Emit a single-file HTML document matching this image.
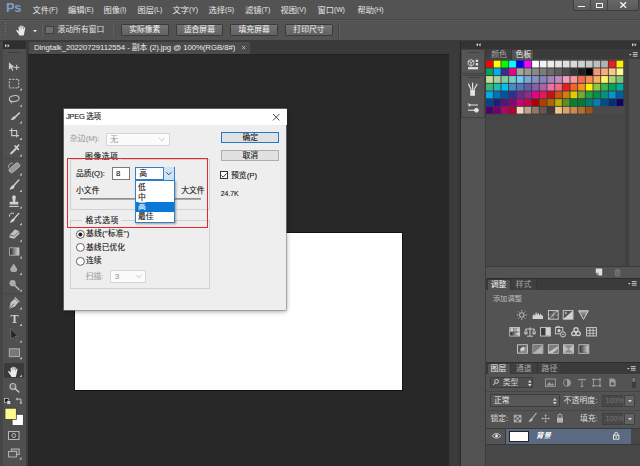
<!DOCTYPE html>
<html lang="zh-CN">
<head>
<meta charset="utf-8">
<title>JPEG 选项</title>
<style>
html,body{margin:0;padding:0;}
body{width:640px;height:466px;overflow:hidden;background:#282828;position:relative;
 font-family:"Liberation Sans","Noto Sans CJK SC",sans-serif;font-size:7.8px;color:#e4e4e4;line-height:1;}
.a,.a *{box-sizing:border-box}
.a{position:absolute;white-space:nowrap}
.t{position:absolute;white-space:nowrap;line-height:10px;height:10px}
svg{position:absolute;overflow:visible}
/* swatches */
.sw i{position:absolute;width:6.9px;height:6.9px;display:block}
/* dialog */
#dlg{position:absolute;left:63.7px;top:109px;width:222.6px;height:200.8px;background:#eeeeee;color:#111;
 box-shadow:0 0 0 0.6px #8a8a8a, 0 1px 5px rgba(0,0,0,.45);}
#dlg .t{color:#111}
.btn{box-sizing:border-box;position:absolute;background:#e1e1e1;border:0.7px solid #adadad;text-align:center;line-height:10px;color:#111}
.ob{position:absolute;top:23.6px;height:12px;width:47.5px;border:0.7px solid #3a3a3a;border-radius:1.5px;
 background:linear-gradient(#747474,#626262);text-align:center;line-height:10.5px;color:#f2f2f2;font-size:7.8px;box-sizing:border-box}
.m{font-size:8.3px;color:#e8e8e8}.m span{font-size:6.9px;letter-spacing:-0.1px;position:relative;top:-0.3px}
#dlg .t,#dlg .btn{-webkit-text-stroke-width:0.1px}
</style>
</head>
<body>

<!-- ===== menu bar ===== -->
<div class="a" style="left:0;top:0;width:640px;height:20px;background:#535353"></div>
<div class="a" style="left:0;top:18.7px;width:640px;height:0.9px;background:#474747"></div>
<div class="t" style="left:6px;top:1px;height:14px;line-height:14px;font-size:12.8px;font-weight:bold;color:#839bcb;letter-spacing:-0.4px">Ps</div>
<div class="t m" style="left:32.5px;top:4.5px">文件<span>(F)</span></div>
<div class="t m" style="left:68px;top:4.5px">编辑<span>(E)</span></div>
<div class="t m" style="left:103.5px;top:4.5px">图像<span>(I)</span></div>
<div class="t m" style="left:137.5px;top:4.5px">图层<span>(L)</span></div>
<div class="t m" style="left:172.5px;top:4.5px">文字<span>(Y)</span></div>
<div class="t m" style="left:208.5px;top:4.5px">选择<span>(S)</span></div>
<div class="t m" style="left:245px;top:4.5px">滤镜<span>(T)</span></div>
<div class="t m" style="left:280.5px;top:4.5px">视图<span>(V)</span></div>
<div class="t m" style="left:317.4px;top:4.5px">窗口<span>(W)</span></div>
<div class="t m" style="left:357.5px;top:4.5px">帮助<span>(H)</span></div>
<!-- window buttons -->
<div class="a" style="left:572.5px;top:-2px;width:66px;height:12.6px;background:linear-gradient(#686868,#5a5a5a);border:0.7px solid #3e3e3e;border-radius:0 0 2px 2px"></div>
<div class="a" style="left:590px;top:0;width:0.8px;height:10.5px;background:#424242"></div>
<div class="a" style="left:607px;top:0;width:0.8px;height:10.5px;background:#424242"></div>
<div class="a" style="left:578px;top:5.8px;width:7px;height:1.6px;background:#f4f4f4"></div>
<div class="a" style="left:595.5px;top:2.6px;width:7px;height:5.2px;border:1.3px solid #f4f4f4;border-top-width:1.8px"></div>
<svg style="left:619.5px;top:2.3px" width="6.4" height="6" viewBox="0 0 6.4 6"><path d="M0.3 0.2 L6.1 5.8 M6.1 0.2 L0.3 5.8" stroke="#f4f4f4" stroke-width="1.4" fill="none"/></svg>

<!-- ===== options bar ===== -->
<div class="a" style="left:0;top:19.6px;width:640px;height:0.9px;background:#5a5a5a;z-index:1"></div>
<div class="a" style="left:0;top:20.5px;width:640px;height:20px;background:#535353"></div>
<div class="a" style="left:0;top:40.2px;width:640px;height:1px;background:#3a3a3a"></div>
<div class="a" style="left:4.5px;top:23px;width:1.4px;height:14px;background:repeating-linear-gradient(#7a7a7a 0 1px,#444 1px 2px)"></div>
<!-- hand icon -->
<svg style="left:15.5px;top:24.8px" width="11.5" height="10.5" viewBox="0 0 23 21"><path d="M7 21 C5 17 2 14 0.5 11.5 C0 10 1.5 9 3 10.5 L5.5 13 L5 4 C5 2.5 7.3 2.5 7.5 4 L8.2 9.5 L8.6 1.8 C8.7 0.2 11.2 0.2 11.3 1.8 L11.6 9.4 L12.6 2.6 C12.9 1.1 15.2 1.4 15.1 3 L14.6 10 L16.3 5.4 C16.9 4 18.9 4.7 18.5 6.2 L16.8 14.5 C16.4 17 15.8 19 15 21 Z" fill="#e9e9e9"/></svg>
<svg style="left:33.3px;top:29.5px" width="4" height="2.4" viewBox="0 0 4 2.4"><path d="M0 0H4L2 2.4Z" fill="#dcdcdc"/></svg>
<div class="a" style="left:41.5px;top:22.5px;width:0.8px;height:15px;background:#454545"></div>
<div class="a" style="left:42.3px;top:22.5px;width:0.7px;height:15px;background:#5f5f5f"></div>
<div class="a" style="left:45.4px;top:26px;width:8.2px;height:8.2px;background:#6e6e6e;border:0.8px solid #404040"></div>
<div class="t" style="left:57.5px;top:25px">滚动所有窗口</div>
<div class="a" style="left:112.6px;top:22.5px;width:0.8px;height:15px;background:#454545"></div>
<div class="a" style="left:113.4px;top:22.5px;width:0.7px;height:15px;background:#5f5f5f"></div>
<div class="ob" style="left:121px">实际像素</div>
<div class="ob" style="left:175.6px">适合屏幕</div>
<div class="ob" style="left:230.4px">填充屏幕</div>
<div class="ob" style="left:285.2px">打印尺寸</div>
<div class="a" style="left:338.4px;top:22.5px;width:0.8px;height:15px;background:#454545"></div>
<div class="a" style="left:339.2px;top:22.5px;width:0.7px;height:15px;background:#5f5f5f"></div>

<!-- ===== document tab bar ===== -->
<div class="a" style="left:28.2px;top:41.2px;width:432.3px;height:12.8px;background:#3a3a3a"></div>
<div class="a" style="left:28.5px;top:41.5px;width:221.5px;height:12.5px;background:#4b4b4b"></div>
<div class="t" id="tabtxt" style="left:34px;top:42.8px;color:#ececec;letter-spacing:-0.065px">Dingtalk_20220729112554 - 副本 (2).jpg @ 100%(RGB/8#)</div>
<svg style="left:242.1px;top:45.9px" width="3.3" height="3.3" viewBox="0 0 4 4"><path d="M0 0L4 4M4 0L0 4" stroke="#c4c4c4" stroke-width="1"/></svg>
<div class="a" style="left:27.5px;top:54px;width:433px;height:0.6px;background:#222"></div>

<!-- ===== canvas ===== -->
<div class="a" style="left:75.1px;top:232.5px;width:326.5px;height:157.5px;background:#fff;box-shadow:0 0 0 0.9px #121212"></div>
<!-- vertical strip right of canvas -->
<div class="a" style="left:449.3px;top:54px;width:11.2px;height:412px;background:linear-gradient(90deg,#383838,#3d3d3d 60%,#353535)"></div>

<!-- ===== left toolbar ===== -->
<div class="a" style="left:0;top:41px;width:28.2px;height:425px;background:#3c3c3c"></div><div class="a" style="left:0;top:41px;width:3px;height:425px;background:#454545"></div>
<div class="a" style="left:3px;top:41px;width:22.6px;height:425px;background:#4f4f4f"></div>
<div class="a" style="left:2.5px;top:41px;width:23.8px;height:7.6px;background:#2f2f2f"></div>
<svg style="left:4.5px;top:43.5px" width="5" height="3.6" viewBox="0 0 5 3.6"><path d="M0 0L2 1.8L0 3.6ZM2.6 0L4.6 1.8L2.6 3.6Z" fill="#d0d0d0"/></svg>
<div class="a" style="left:8px;top:52.3px;width:13px;height:1px;background:#3e3e3e"></div>
<!-- hand highlight -->
<div class="a" style="left:4px;top:363.2px;width:19.8px;height:15px;background:#3a3a3a;border-radius:1.5px"></div>
<!--TOOLS-->
<svg id="tools" style="left:0;top:0;opacity:0.86" width="28" height="466" viewBox="0 0 28 466" fill="none" stroke="none">
 <!-- move -->
 <path d="M8.9 62.2 L8.9 69.8 L10.8 68 L12.3 70.9 L13.4 70.4 L12 67.5 L14.6 67.3 Z" fill="#e0e0e0"/>
 <path d="M16.7 64.8V70M14.1 67.4H19.3" stroke="#e0e0e0" stroke-width="1"/>
 <!-- marquee -->
 <rect x="9.3" y="79.3" width="9.4" height="8.6" stroke="#e0e0e0" stroke-width="1" stroke-dasharray="2 1.2"/>
 <!-- lasso -->
 <ellipse cx="14.2" cy="98.6" rx="4.9" ry="2.9" stroke="#d8d8d8" stroke-width="1.05" transform="rotate(-9 14.2 98.6)"/>
 <path d="M10.4 100.6 C10 101.8 11.4 102.4 11.4 103.6" stroke="#d8d8d8" stroke-width="1"/>
 <!-- quick select -->
 <g transform="translate(1.2 0.2)"><path d="M18.6 112.4 L13.6 117.2" stroke="#e0e0e0" stroke-width="1.5"/>
 <path d="M13.8 116 C11.8 116 10.6 117.6 9.6 119.6 C11.8 120.2 14 119.4 14.8 117.4 Z" fill="#e0e0e0"/></g>
 <!-- crop -->
 <path d="M11.7 128.2V135.6H19M9.3 130.5H16.7V137.6" stroke="#dedede" stroke-width="1.15"/>
 <!-- eyedropper -->
 <path d="M10 154.6 L10.6 152.6 L15.6 147.6 L17 149 L12 154 Z" fill="#e6e6e6"/>
 <path d="M15 146 L18.4 149.4 M16.6 147.4 L18.6 145.2" stroke="#e6e6e6" stroke-width="1.7" stroke-linecap="round"/>
 <!-- separator -->
 <path d="M4 158.8H24.5" stroke="#444" stroke-width="0.8"/>
 <!-- heal -->
 <rect x="8.4" y="165.4" width="12" height="4.8" rx="1.8" fill="#a4a4a4" stroke="#d2d2d2" stroke-width="0.8" transform="rotate(-40 14.4 167.8)"/>
 <path d="M8.6 167.6 A3.6 3.6 0 0 1 12.6 163.2" stroke="#c8c8c8" stroke-width="0.9"/>
 <!-- brush -->
 <path d="M18.8 180 L13.4 186" stroke="#e6e6e6" stroke-width="1.4" stroke-linecap="round"/>
 <path d="M13.4 185 C11.6 185.2 11 187 9.4 189.4 C12 189.6 14.2 188.6 14.6 186.4 Z" fill="#e6e6e6"/>
 <!-- stamp -->
 <g transform="translate(-0.3 1.4)"><path d="M12.6 196.6 A1.9 1.9 0 1 1 16 196.6 L15.4 200.4 H18.6 V203 H10 V200.4 H13.2 Z" fill="#e6e6e6"/>
 <path d="M9.6 205H19" stroke="#e6e6e6" stroke-width="1.1"/></g>
 <!-- history brush -->
 <path d="M18.8 213.4 L13.6 219.2" stroke="#e6e6e6" stroke-width="1.4" stroke-linecap="round"/>
 <path d="M13.6 218.4 C11.8 218.6 11.2 220.4 9.6 222.6 C12.2 222.8 14.4 221.8 14.8 219.6 Z" fill="#e6e6e6"/>
 <path d="M9.4 216.6 A3 3 0 0 1 14 213.6" stroke="#e6e6e6" stroke-width="1"/>
 <!-- eraser -->
 <g transform="translate(0.2 -0.9)"><path d="M9.4 236 L14.6 230.4 L19.2 231.8 L19.2 234.6 L14 239.6 L9.4 238.6 Z" fill="#d4d4d4"/>
 <path d="M9.4 236 L14.2 237 L19.2 231.8" stroke="#535353" stroke-width="0.7"/></g>
 <!-- gradient -->
 <rect x="9.2" y="247.4" width="10.2" height="8.2" fill="#c8c8c8"/>
 <rect x="10" y="248.2" width="8.6" height="6.6" fill="url(#gr1)"/>
 <!-- blur drop -->
 <path d="M13.7 263.4 C14.9 266 17.2 267.6 17.2 269.4 A3.5 2.6 0 0 1 10.2 269.4 C10.2 267.6 12.5 266 13.7 263.4 Z" fill="#bcbcbc"/>
 <!-- dodge -->
 <circle cx="12.6" cy="283.2" r="3.1" fill="#bcbcbc"/>
 <path d="M14.8 285.4 L19 289.4" stroke="#d0d0d0" stroke-width="1.4" stroke-linecap="round"/>
 <!-- separator -->
 <path d="M4 293.8H24.5" stroke="#444" stroke-width="0.8"/>
 <!-- pen -->
 <g transform="translate(-0.7 0.7)"><path d="M10 308 L11.4 301.6 L15.4 298 L19 301.6 L15.6 305.8 Z" fill="#dadada"/>
 <path d="M10.4 307.6 L14.6 303" stroke="#535353" stroke-width="0.8"/>
 <path d="M15.4 296.6 L20.2 301.4" stroke="#dadada" stroke-width="1.2"/></g>
 <!-- path select -->
 <path d="M10.8 328.6 L10.8 339.4 L13.2 337.2 L15 341 L16.4 340.4 L14.8 336.6 L17.8 336.2 Z" fill="#1e1e1e" stroke="#9a9a9a" stroke-width="0.5"/>
 <!-- rectangle -->
 <rect x="9.3" y="348.8" width="10.2" height="7.8" fill="#7e7e7e" stroke="#bdbdbd" stroke-width="1"/>
 <!-- zoom -->
 <circle cx="12.9" cy="386.4" r="2.9" stroke="#cecece" stroke-width="1.2" fill="#6a6a6a"/>
 <path d="M15.2 388.7 L18.8 392" stroke="#d4d4d4" stroke-width="1.6" stroke-linecap="round"/>
 <!-- default colors / swap -->
 <rect x="4.6" y="398.4" width="3.9" height="3.9" fill="#111" stroke="#e0e0e0" stroke-width="0.7"/>
 <rect x="6.9" y="400.6" width="3.9" height="3.9" fill="#f0f0f0" stroke="#222" stroke-width="0.5"/>
 <g transform="translate(0.7 0.9)"><path d="M16.6 398.2 H20.2 V402" stroke="#dcdcdc" stroke-width="1"/>
 <path d="M16.8 396.6 L15 398.2 L16.8 399.8 Z M18.6 401.6 L20.2 403.4 L21.8 401.6 Z" fill="#dcdcdc"/></g>
 <!-- bg / fg swatches -->
 <!-- quick mask -->
 <rect x="8.6" y="431.6" width="10.4" height="7.8" stroke="#d8d8d8" stroke-width="1" fill="#3a3a3a"/>
 <circle cx="13.8" cy="435.5" r="2.1" stroke="#d0d0d0" stroke-width="0.9" fill="#555"/>
 <!-- screen mode -->
 <rect x="11.4" y="449" width="7.8" height="5.6" stroke="#d0d0d0" stroke-width="0.9" fill="#686868"/>
 <rect x="8.6" y="451.4" width="7.8" height="5.6" stroke="#d0d0d0" stroke-width="0.9" fill="#555"/>
 <!-- corner marks -->
 <g fill="#dcdcdc" transform="translate(-0.5 -0.6)">
  <path d="M22.4 88.6V91H20Z"/><path d="M22.4 105V107.4H20Z"/><path d="M22.4 121.6V124H20Z"/><path d="M22.4 138.2V140.6H20Z"/>
  <path d="M22.4 154.8V157.2H20Z"/><path d="M22.4 173.6V176H20Z"/><path d="M22.4 190.2V192.6H20Z"/><path d="M22.4 206.8V209.2H20Z"/>
  <path d="M22.4 223.4V225.8H20Z"/><path d="M22.4 240V242.4H20Z"/><path d="M22.4 256.6V259H20Z"/><path d="M22.4 273.2V275.6H20Z"/>
  <path d="M22.4 289.8V292.2H20Z"/><path d="M22.4 307.6V310H20Z"/><path d="M22.4 324.2V326.6H20Z"/><path d="M22.4 340.8V343.2H20Z"/>
  <path d="M22.4 357.4V359.8H20Z"/><path d="M22.4 375.2V377.6H20Z"/><path d="M22 457.6V460H19.6Z"/>
 </g>
 <defs><linearGradient id="gr1" x1="0" x2="1"><stop offset="0" stop-color="#2a2a2a"/><stop offset="1" stop-color="#e8e8e8"/></linearGradient></defs>
</svg>
<svg style="left:0;top:400px" width="28" height="30" viewBox="0 400 28 30">
 <rect x="12.1" y="414.3" width="11.2" height="11.2" fill="#ffffff" stroke="#2c2c2c" stroke-width="0.7"/>
 <rect x="5" y="408.2" width="11.3" height="11.3" fill="#fdf98c" stroke="#2c2c2c" stroke-width="0.7"/>
</svg>
<div class="t" style="left:10.5px;top:312.4px;height:14px;line-height:14px;font-family:'Liberation Serif',serif;font-size:12px;font-weight:bold;color:#cdcdcd">T</div>
<!-- hand tool in toolbar -->
<svg style="left:8.4px;top:365.6px" width="11.8" height="11" viewBox="0 0 23 21"><path d="M7 21 C5 17 2 14 0.5 11.5 C0 10 1.5 9 3 10.5 L5.5 13 L5 4 C5 2.5 7.3 2.5 7.5 4 L8.2 9.5 L8.6 1.8 C8.7 0.2 11.2 0.2 11.3 1.8 L11.6 9.4 L12.6 2.6 C12.9 1.1 15.2 1.4 15.1 3 L14.6 10 L16.3 5.4 C16.9 4 18.9 4.7 18.5 6.2 L16.8 14.5 C16.4 17 15.8 19 15 21 Z" fill="#ececec"/></svg>

<!-- ===== right dock ===== -->
<div class="a" style="left:460.5px;top:41.2px;width:179.5px;height:425px;background:#474747"></div>
<div class="a" style="left:460.5px;top:41.2px;width:179.5px;height:7.6px;background:#333"></div>
<svg style="left:475.6px;top:43.2px" width="5" height="3.6" viewBox="0 0 5 3.6"><path d="M2 0L0 1.8L2 3.6ZM4.6 0L2.6 1.8L4.6 3.6Z" fill="#d0d0d0"/></svg>
<svg style="left:631.8px;top:43.2px" width="5" height="3.6" viewBox="0 0 5 3.6"><path d="M0 0L2 1.8L0 3.6ZM2.6 0L4.6 1.8L2.6 3.6Z" fill="#d0d0d0"/></svg>
<!-- icon column -->
<div class="a" style="left:460.5px;top:48.8px;width:24.6px;height:417.2px;background:#525252"></div>
<div class="a" style="left:460.5px;top:48.8px;width:24.6px;height:25.6px;background:#555;border:0.7px solid #424242"></div>
<div class="a" style="left:460.5px;top:75.4px;width:24.6px;height:42.8px;background:#555;border:0.7px solid #424242"></div>
<div class="a" style="left:467px;top:52px;width:11.5px;height:1px;background:#414141"></div>
<div class="a" style="left:467px;top:77.4px;width:11.5px;height:1px;background:#414141"></div>
<div class="a" style="left:485.1px;top:48.8px;width:0.8px;height:417.2px;background:#3c3c3c"></div>
<svg id="dockicons" style="left:460px;top:40px" width="26" height="90" viewBox="460 40 26 90" fill="none">
 <!-- 3d cube -->
 <g transform="translate(0 0.7)">
 <path d="M471 58.8 L473.8 60.2 V63.8 L471 65.4 L468.2 63.8 V60.2 Z M468.2 60.2 L471 61.8 L473.8 60.2 M471 61.8 V65.4" stroke="#e2e2e2" stroke-width="0.85"/>
 <rect x="475.7" y="59" width="2.4" height="2.2" fill="#e2e2e2"/><rect x="475.7" y="62.4" width="2.4" height="2.4" fill="#e2e2e2"/>
 <rect x="468" y="66.4" width="10.1" height="2.2" fill="#e2e2e2"/>
 </g>
 <!-- brush presets -->
 <g transform="translate(-0.4 -5.8)">
 <path d="M470.6 95.6 H475.4 V101.6 H470.6 Z" fill="#e2e2e2"/>
 <path d="M473 95 V89 M471.4 95 L469 90 M474.6 95 L477.4 90" stroke="#e2e2e2" stroke-width="1.2" stroke-linecap="round"/>
 </g>
 <!-- tool presets -->
 <g transform="translate(0 -5.2)">
 <path d="M467.8 109 L470.8 110.2 H478 M470.4 110.2 L468.6 111.4" stroke="#e2e2e2" stroke-width="1.2"/>
 <path d="M468 115.4 H475" stroke="#e2e2e2" stroke-width="1.1"/>
 <circle cx="476.4" cy="115.4" r="1.9" stroke="#e2e2e2" stroke-width="1" fill="#e2e2e2"/>
 </g>
</svg>

<!-- swatches panel -->
<div class="a" style="left:485.9px;top:48.8px;width:154.1px;height:10.6px;background:#3b3b3b"></div>
<div class="a" style="left:511.2px;top:49.2px;width:23px;height:10.4px;background:#535353;border:0.6px solid #383838;border-bottom:none"></div>
<div class="a" style="left:486.6px;top:49.2px;width:24.6px;height:10.2px;background:#3f3f3f"></div>
<div class="t" style="left:491.2px;top:50px;color:#a8a8a8">颜色</div>
<div class="t" style="left:515.6px;top:50px;color:#ececec">色板</div>
<svg style="left:629px;top:51.6px" width="9" height="6" viewBox="0 0 9 6"><path d="M0 2H2.6L1.3 3.6Z" fill="#d6d6d6"/><path d="M3.8 0.6H8.6M3.8 2.4H8.6M3.8 4.2H8.6" stroke="#d6d6d6" stroke-width="0.9"/></svg>
<div class="a" style="left:625.2px;top:59.4px;width:4px;height:207px;background:#404040"></div>
<div class="a" style="left:629.2px;top:59.4px;width:10.8px;height:207px;background:#4d4d4d"></div>
<svg style="left:0;top:0" width="640" height="130" viewBox="0 0 640 130"><rect x="485.6" y="60.2" width="138.6" height="54.2" fill="#3d3d3d"/><rect x="593" y="106.2" width="32" height="8.6" fill="#4a4a4a"/><rect x="486.10" y="60.70" width="6.75" height="6.75" fill="#ff0000"/><rect x="493.77" y="60.70" width="6.75" height="6.75" fill="#ffff00"/><rect x="501.44" y="60.70" width="6.75" height="6.75" fill="#00ff00"/><rect x="509.11" y="60.70" width="6.75" height="6.75" fill="#00ffff"/><rect x="516.78" y="60.70" width="6.75" height="6.75" fill="#0000ff"/><rect x="524.45" y="60.70" width="6.75" height="6.75" fill="#ff00ff"/><rect x="532.12" y="60.70" width="6.75" height="6.75" fill="#ffffff"/><rect x="539.79" y="60.70" width="6.75" height="6.75" fill="#f2f2f2"/><rect x="547.46" y="60.70" width="6.75" height="6.75" fill="#ececec"/><rect x="555.13" y="60.70" width="6.75" height="6.75" fill="#e6e6e6"/><rect x="562.80" y="60.70" width="6.75" height="6.75" fill="#e0e0e0"/><rect x="570.47" y="60.70" width="6.75" height="6.75" fill="#d9d9d9"/><rect x="578.14" y="60.70" width="6.75" height="6.75" fill="#d1d1d1"/><rect x="585.81" y="60.70" width="6.75" height="6.75" fill="#c8c8c8"/><rect x="593.48" y="60.70" width="6.75" height="6.75" fill="#bebebe"/><rect x="601.15" y="60.70" width="6.75" height="6.75" fill="#b2b2b2"/><rect x="608.82" y="60.70" width="6.75" height="6.75" fill="#ed1c24"/><rect x="616.49" y="60.70" width="6.75" height="6.75" fill="#fff200"/><rect x="486.10" y="68.39" width="6.75" height="6.75" fill="#00a651"/><rect x="493.77" y="68.39" width="6.75" height="6.75" fill="#00aeef"/><rect x="501.44" y="68.39" width="6.75" height="6.75" fill="#2e3192"/><rect x="509.11" y="68.39" width="6.75" height="6.75" fill="#ec008c"/><rect x="516.78" y="68.39" width="6.75" height="6.75" fill="#a5a5a5"/><rect x="524.45" y="68.39" width="6.75" height="6.75" fill="#989898"/><rect x="532.12" y="68.39" width="6.75" height="6.75" fill="#8a8a8a"/><rect x="539.79" y="68.39" width="6.75" height="6.75" fill="#7c7c7c"/><rect x="547.46" y="68.39" width="6.75" height="6.75" fill="#6c6c6c"/><rect x="555.13" y="68.39" width="6.75" height="6.75" fill="#5c5c5c"/><rect x="562.80" y="68.39" width="6.75" height="6.75" fill="#4a4a4a"/><rect x="570.47" y="68.39" width="6.75" height="6.75" fill="#363636"/><rect x="578.14" y="68.39" width="6.75" height="6.75" fill="#1e1e1e"/><rect x="585.81" y="68.39" width="6.75" height="6.75" fill="#000000"/><rect x="593.48" y="68.39" width="6.75" height="6.75" fill="#f69679"/><rect x="601.15" y="68.39" width="6.75" height="6.75" fill="#f9ad81"/><rect x="608.82" y="68.39" width="6.75" height="6.75" fill="#fdc689"/><rect x="616.49" y="68.39" width="6.75" height="6.75" fill="#fff799"/><rect x="486.10" y="76.08" width="6.75" height="6.75" fill="#c4df9b"/><rect x="493.77" y="76.08" width="6.75" height="6.75" fill="#a3d39c"/><rect x="501.44" y="76.08" width="6.75" height="6.75" fill="#82ca9c"/><rect x="509.11" y="76.08" width="6.75" height="6.75" fill="#7accc8"/><rect x="516.78" y="76.08" width="6.75" height="6.75" fill="#6dcff6"/><rect x="524.45" y="76.08" width="6.75" height="6.75" fill="#7da7d9"/><rect x="532.12" y="76.08" width="6.75" height="6.75" fill="#8393ca"/><rect x="539.79" y="76.08" width="6.75" height="6.75" fill="#8781bd"/><rect x="547.46" y="76.08" width="6.75" height="6.75" fill="#a186be"/><rect x="555.13" y="76.08" width="6.75" height="6.75" fill="#bd8cbf"/><rect x="562.80" y="76.08" width="6.75" height="6.75" fill="#f49ac1"/><rect x="570.47" y="76.08" width="6.75" height="6.75" fill="#f5989d"/><rect x="578.14" y="76.08" width="6.75" height="6.75" fill="#f26c4f"/><rect x="585.81" y="76.08" width="6.75" height="6.75" fill="#f68e56"/><rect x="593.48" y="76.08" width="6.75" height="6.75" fill="#fbaf5d"/><rect x="601.15" y="76.08" width="6.75" height="6.75" fill="#fff568"/><rect x="608.82" y="76.08" width="6.75" height="6.75" fill="#acd373"/><rect x="616.49" y="76.08" width="6.75" height="6.75" fill="#7cc576"/><rect x="486.10" y="83.77" width="6.75" height="6.75" fill="#3cb878"/><rect x="493.77" y="83.77" width="6.75" height="6.75" fill="#1cbbb4"/><rect x="501.44" y="83.77" width="6.75" height="6.75" fill="#00bff3"/><rect x="509.11" y="83.77" width="6.75" height="6.75" fill="#448ccb"/><rect x="516.78" y="83.77" width="6.75" height="6.75" fill="#5674b9"/><rect x="524.45" y="83.77" width="6.75" height="6.75" fill="#605ca8"/><rect x="532.12" y="83.77" width="6.75" height="6.75" fill="#8560a8"/><rect x="539.79" y="83.77" width="6.75" height="6.75" fill="#a864a8"/><rect x="547.46" y="83.77" width="6.75" height="6.75" fill="#f06eaa"/><rect x="555.13" y="83.77" width="6.75" height="6.75" fill="#f26d7d"/><rect x="562.80" y="83.77" width="6.75" height="6.75" fill="#ed1c24"/><rect x="570.47" y="83.77" width="6.75" height="6.75" fill="#f26522"/><rect x="578.14" y="83.77" width="6.75" height="6.75" fill="#f7941d"/><rect x="585.81" y="83.77" width="6.75" height="6.75" fill="#fff200"/><rect x="593.48" y="83.77" width="6.75" height="6.75" fill="#8dc63f"/><rect x="601.15" y="83.77" width="6.75" height="6.75" fill="#39b54a"/><rect x="608.82" y="83.77" width="6.75" height="6.75" fill="#00a651"/><rect x="616.49" y="83.77" width="6.75" height="6.75" fill="#00a99d"/><rect x="486.10" y="91.46" width="6.75" height="6.75" fill="#00aeef"/><rect x="493.77" y="91.46" width="6.75" height="6.75" fill="#0072bc"/><rect x="501.44" y="91.46" width="6.75" height="6.75" fill="#0054a6"/><rect x="509.11" y="91.46" width="6.75" height="6.75" fill="#2e3192"/><rect x="516.78" y="91.46" width="6.75" height="6.75" fill="#662d91"/><rect x="524.45" y="91.46" width="6.75" height="6.75" fill="#92278f"/><rect x="532.12" y="91.46" width="6.75" height="6.75" fill="#ec008c"/><rect x="539.79" y="91.46" width="6.75" height="6.75" fill="#ed145b"/><rect x="547.46" y="91.46" width="6.75" height="6.75" fill="#ca0e13"/><rect x="555.13" y="91.46" width="6.75" height="6.75" fill="#cd5311"/><rect x="562.80" y="91.46" width="6.75" height="6.75" fill="#d17c0c"/><rect x="570.47" y="91.46" width="6.75" height="6.75" fill="#dbcd00"/><rect x="578.14" y="91.46" width="6.75" height="6.75" fill="#72aa32"/><rect x="585.81" y="91.46" width="6.75" height="6.75" fill="#209d3d"/><rect x="593.48" y="91.46" width="6.75" height="6.75" fill="#009245"/><rect x="601.15" y="91.46" width="6.75" height="6.75" fill="#009489"/><rect x="608.82" y="91.46" width="6.75" height="6.75" fill="#0097d1"/><rect x="616.49" y="91.46" width="6.75" height="6.75" fill="#005fa4"/><rect x="486.10" y="99.15" width="6.75" height="6.75" fill="#004493"/><rect x="493.77" y="99.15" width="6.75" height="6.75" fill="#231a82"/><rect x="501.44" y="99.15" width="6.75" height="6.75" fill="#58127f"/><rect x="509.11" y="99.15" width="6.75" height="6.75" fill="#81057d"/><rect x="516.78" y="99.15" width="6.75" height="6.75" fill="#cd0079"/><rect x="524.45" y="99.15" width="6.75" height="6.75" fill="#cd004a"/><rect x="532.12" y="99.15" width="6.75" height="6.75" fill="#ac0000"/><rect x="539.79" y="99.15" width="6.75" height="6.75" fill="#af4100"/><rect x="547.46" y="99.15" width="6.75" height="6.75" fill="#b26800"/><rect x="555.13" y="99.15" width="6.75" height="6.75" fill="#b9af00"/><rect x="562.80" y="99.15" width="6.75" height="6.75" fill="#5b9122"/><rect x="570.47" y="99.15" width="6.75" height="6.75" fill="#00852d"/><rect x="578.14" y="99.15" width="6.75" height="6.75" fill="#007d36"/><rect x="585.81" y="99.15" width="6.75" height="6.75" fill="#007e74"/><rect x="593.48" y="99.15" width="6.75" height="6.75" fill="#0081b4"/><rect x="601.15" y="99.15" width="6.75" height="6.75" fill="#004d8d"/><rect x="608.82" y="99.15" width="6.75" height="6.75" fill="#002f7c"/><rect x="616.49" y="99.15" width="6.75" height="6.75" fill="#12006c"/><rect x="486.10" y="106.84" width="6.75" height="6.75" fill="#4b0070"/><rect x="493.77" y="106.84" width="6.75" height="6.75" fill="#70006e"/><rect x="501.44" y="106.84" width="6.75" height="6.75" fill="#b80069"/><rect x="509.11" y="106.84" width="6.75" height="6.75" fill="#b70039"/><rect x="516.78" y="106.84" width="6.75" height="6.75" fill="#f3d9bb"/><rect x="524.45" y="106.84" width="6.75" height="6.75" fill="#bba38f"/><rect x="532.12" y="106.84" width="6.75" height="6.75" fill="#8c796a"/><rect x="539.79" y="106.84" width="6.75" height="6.75" fill="#65574f"/><rect x="547.46" y="106.84" width="6.75" height="6.75" fill="#423937"/><rect x="555.13" y="106.84" width="6.75" height="6.75" fill="#f0c68c"/><rect x="562.80" y="106.84" width="6.75" height="6.75" fill="#d7a569"/><rect x="570.47" y="106.84" width="6.75" height="6.75" fill="#c68c4e"/><rect x="578.14" y="106.84" width="6.75" height="6.75" fill="#b27030"/><rect x="585.81" y="106.84" width="6.75" height="6.75" fill="#9e5614"/></svg>
<!-- swatches footer -->
<div class="a" style="left:485.9px;top:266.4px;width:154.1px;height:11.2px;background:#535353;border-top:0.7px solid #3c3c3c"></div>
<svg style="left:593px;top:267px" width="32" height="11" viewBox="593 267 32 11" fill="none">
 <path d="M595.8 268.6 H602.2 V275.6 H598.2 L595.8 273.2 Z" fill="#e0e0e0"/><path d="M595.8 273.2 H598.2 V275.6" stroke="#535353" stroke-width="0.7"/>
 <path d="M614.6 270.4 H620.6 M616.4 270.2 V269.2 H618.8 V270.2 M615.2 271.4 L615.6 276 H619.6 L620 271.4 Z" stroke="#777" stroke-width="0.9" fill="#666"/>
</svg>

<!-- adjustments panel -->
<div class="a" style="left:485.9px;top:277.6px;width:154.1px;height:0.9px;background:#2e2e2e"></div>
<div class="a" style="left:485.9px;top:278.5px;width:154.1px;height:11.2px;background:#3b3b3b"></div>
<div class="a" style="left:486.6px;top:279px;width:24.4px;height:10.8px;background:#535353;border:0.6px solid #383838;border-bottom:none"></div>
<div class="a" style="left:511px;top:279px;width:25.6px;height:10.7px;background:#3f3f3f;border-right:0.6px solid #343434"></div>
<div class="t" style="left:490.7px;top:280.1px;color:#f0f0f0">调整</div>
<div class="t" style="left:515.7px;top:280.1px;color:#a8a8a8">样式</div>
<svg style="left:628px;top:281.4px" width="9" height="6" viewBox="0 0 9 6"><path d="M0 2H2.6L1.3 3.6Z" fill="#d6d6d6"/><path d="M3.8 0.6H8.6M3.8 2.4H8.6M3.8 4.2H8.6" stroke="#d6d6d6" stroke-width="0.9"/></svg>
<div class="a" style="left:485.9px;top:289.7px;width:154.1px;height:72px;background:#535353"></div>
<div class="t" style="left:492.8px;top:293.6px;color:#bcbcbc;font-size:7.3px">添加调整</div>
<svg id="adj" style="left:486px;top:305px" width="154" height="55" viewBox="486 305 154 55" fill="none">
 <!-- row1 -->
 <g stroke="#d2d2d2" stroke-width="0.9">
  <circle cx="521.8" cy="315" r="2.3"/>
  <path d="M521.8 310V311.4M521.8 318.6V320M516.8 315H518.2M525.4 315H526.8M518.3 311.5L519.3 312.5M524.3 317.5L525.3 318.5M518.3 318.5L519.3 317.5M524.3 312.5L525.3 311.5"/>
 </g>
 <path d="M532.6 319 V316 L534 314 L535 316 L536 311.4 L537.2 315 L538.4 312.4 L539.6 315.6 L540.8 313.4 L542 316 L543 315 V319 Z" fill="#d2d2d2"/>
 <rect x="548.4" y="310.6" width="9.8" height="8.6" stroke="#d2d2d2" stroke-width="0.9"/><path d="M548.8 318.8 C552.4 318 553.8 311.6 557.8 311" stroke="#d2d2d2" stroke-width="0.9"/><path d="M548.4 314.9H558.2M553.3 310.6V319.2" stroke="#d2d2d2" stroke-width="0.4"/>
 <rect x="563.2" y="310.6" width="9.8" height="8.6" stroke="#d2d2d2" stroke-width="0.9"/><path d="M563.4 319 L572.8 310.8 V319 Z" fill="#d2d2d2"/><path d="M564.6 313H567M565.8 311.8V314.2" stroke="#d2d2d2" stroke-width="0.7"/>
 <path d="M578.6 310.8 H588.4 L583.5 319.4 Z" stroke="#d2d2d2" stroke-width="1" fill="url(#gr4)"/>
 <!-- row2 -->
 <rect x="509.8" y="327.6" width="9.8" height="8.4" stroke="#d2d2d2" stroke-width="0.9"/><rect x="510.4" y="328.2" width="2.8" height="3.4" fill="#d2d2d2"/><rect x="513.6" y="328.2" width="2.8" height="3.4" fill="#aaa"/><rect x="516.6" y="328.2" width="2.6" height="3.4" fill="#d2d2d2"/><rect x="510.4" y="332.4" width="8.8" height="3" fill="url(#gr2)"/>
 <path d="M530 327.4 V336 M527 336.2 H533 M525.6 329 H534.4" stroke="#d2d2d2" stroke-width="0.9"/><path d="M524.4 333 L525.8 329.4 L527.4 333 Z M532.6 333 L534.2 329.4 L535.6 333 Z" stroke="#d2d2d2" stroke-width="0.8"/><path d="M524.2 333.2 A1.7 1.4 0 0 0 527.6 333.2 Z M532.4 333.2 A1.7 1.4 0 0 0 535.8 333.2 Z" fill="#d2d2d2"/>
 <rect x="540.6" y="327.6" width="9.8" height="8.4" stroke="#d2d2d2" stroke-width="0.9" fill="#3a3a3a"/><rect x="545.5" y="328" width="4.5" height="7.6" fill="#d2d2d2"/>
 <rect x="555.4" y="327.4" width="7.4" height="6.4" stroke="#d2d2d2" stroke-width="0.9"/><path d="M556.6 327.4 V326.4 H559.6 V327.4" stroke="#d2d2d2" stroke-width="0.8"/><circle cx="559" cy="330.6" r="1.6" fill="#d2d2d2"/><circle cx="563" cy="334.4" r="2.6" stroke="#d2d2d2" stroke-width="0.9" fill="#535353"/><path d="M561.8 334.4H564.2" stroke="#d2d2d2" stroke-width="0.8"/>
 <circle cx="576" cy="329.8" r="2.7" fill="#d2d2d2"/><circle cx="573.8" cy="333.6" r="2.7" fill="#d2d2d2"/><circle cx="578.2" cy="333.6" r="2.7" fill="#d2d2d2"/><circle cx="576" cy="329.8" r="1.4" fill="#535353"/><circle cx="573.8" cy="333.6" r="1.4" fill="#535353"/><circle cx="578.2" cy="333.6" r="1.4" fill="#535353"/>
 <rect x="586.6" y="327.6" width="9.8" height="8.4" stroke="#d2d2d2" stroke-width="0.9"/><path d="M589.9 327.6V336M593.1 327.6V336M586.6 330.4H596.4M586.6 333.2H596.4" stroke="#d2d2d2" stroke-width="0.8"/>
 <!-- row3 -->
 <rect x="517.6" y="344.8" width="9.8" height="8.4" stroke="#d2d2d2" stroke-width="0.9"/><path d="M518 353 L527 345.2 V353 Z" fill="#8a8a8a"/><ellipse cx="522.5" cy="349" rx="2.6" ry="1.7" fill="#d2d2d2" transform="rotate(-35 522.5 349)"/>
 <rect x="533" y="344.8" width="9.8" height="8.4" stroke="#d2d2d2" stroke-width="0.9"/><rect x="533.5" y="345.3" width="8.8" height="7.4" fill="#7c7c7c"/><path d="M533.4 353 L542.4 345.2 V353 Z" fill="#b4b4b4"/>
 <rect x="548.4" y="344.8" width="9.8" height="8.4" stroke="#d2d2d2" stroke-width="0.9"/><rect x="548.9" y="345.3" width="8.8" height="7.4" fill="#7c7c7c"/><path d="M548.8 352 L557.8 346.2 V348.8 L552.8 353 H548.8 Z" fill="#c4c4c4"/>
 <rect x="563.6" y="344.8" width="9.8" height="8.4" stroke="#d2d2d2" stroke-width="0.9" fill="#8a8a8a"/><path d="M564 345.2 L568.5 349 L564 352.8 Z M573 345.2 L568.5 349 L573 352.8 Z" fill="#bcbcbc"/>
 <rect x="579" y="344.8" width="9.8" height="8.4" stroke="#d2d2d2" stroke-width="0.9"/><rect x="579.6" y="345.4" width="8.6" height="7.2" fill="url(#gr3)"/>
 <defs><linearGradient id="gr2" x1="0" x2="1"><stop offset="0" stop-color="#222"/><stop offset="1" stop-color="#eee"/></linearGradient>
 <linearGradient id="gr3" x1="0" x2="1"><stop offset="0" stop-color="#333"/><stop offset="1" stop-color="#ccc"/></linearGradient><linearGradient id="gr4" x1="0" x2="0" y1="0" y2="1"><stop offset="0" stop-color="#aaa"/><stop offset="1" stop-color="#444"/></linearGradient></defs>
</svg>

<!-- layers panel -->
<div class="a" style="left:485.9px;top:361.6px;width:154.1px;height:0.9px;background:#2e2e2e"></div>
<div class="a" style="left:485.9px;top:362.5px;width:154.1px;height:11.2px;background:#3b3b3b"></div>
<div class="a" style="left:486.6px;top:363px;width:24.4px;height:10.8px;background:#535353;border:0.6px solid #383838;border-bottom:none"></div>
<div class="t" style="left:490.6px;top:364.4px;color:#f0f0f0">图层</div>
<div class="a" style="left:511px;top:363px;width:51px;height:10.7px;background:#3f3f3f;border-right:0.6px solid #343434"></div><div class="a" style="left:536.6px;top:363px;width:0.6px;height:10.7px;background:#343434"></div>
<div class="t" style="left:516px;top:364.4px;color:#a8a8a8">通道</div>
<div class="t" style="left:541.6px;top:364.4px;color:#a8a8a8">路径</div>
<svg style="left:627px;top:365.6px" width="9" height="6" viewBox="0 0 9 6"><path d="M0 2H2.6L1.3 3.6Z" fill="#d6d6d6"/><path d="M3.8 0.6H8.6M3.8 2.4H8.6M3.8 4.2H8.6" stroke="#d6d6d6" stroke-width="0.9"/></svg>
<div class="a" style="left:485.9px;top:373.7px;width:154.1px;height:54.6px;background:#535353"></div>
<!-- filter row -->
<div class="a" style="left:489.8px;top:377.2px;width:43.6px;height:11px;background:#4e4e4e;border:0.6px solid #3e3e3e;border-radius:1px"></div>
<svg style="left:492.6px;top:379.4px" width="6" height="6.4" viewBox="0 0 6 6.4" fill="none"><circle cx="3.6" cy="2.4" r="1.9" stroke="#d8d8d8" stroke-width="0.9"/><path d="M2.2 3.8L0.4 6" stroke="#d8d8d8" stroke-width="1"/></svg>
<div class="t" style="left:502.8px;top:377.8px;color:#d2d2d2">类型</div>
<svg style="left:527.6px;top:379.6px" width="3.6" height="6.4" viewBox="0 0 3.6 6.4"><path d="M0 2.4L1.8 0L3.6 2.4ZM0 4L1.8 6.4L3.6 4Z" fill="#d8d8d8"/></svg>
<svg id="lfilt" style="left:545px;top:376px" width="95" height="13" viewBox="545 376 95 13" fill="none">
 <rect x="545.4" y="379" width="10" height="7.4" stroke="#9c9c9c" stroke-width="0.9"/><path d="M546.4 385.4 L549.2 382 L551.2 384.2 L552.6 383 L554.4 385.4Z" fill="#9c9c9c"/>
 <circle cx="567" cy="382.8" r="3.5" stroke="#9c9c9c" stroke-width="0.9"/><path d="M567 379.3 A3.5 3.5 0 0 1 567 386.3Z" fill="#9c9c9c"/>
 <path d="M578.6 379.4H585.4M582 379.4V386.4M580.6 386.4H583.4M578.6 379.4V380.6M585.4 379.4V380.6" stroke="#9c9c9c" stroke-width="1"/>
 <rect x="593.4" y="379.4" width="6.6" height="6.4" stroke="#9c9c9c" stroke-width="0.9"/><rect x="592.4" y="378.4" width="2" height="2" fill="#9c9c9c"/><rect x="599" y="378.4" width="2" height="2" fill="#9c9c9c"/><rect x="592.4" y="384.8" width="2" height="2" fill="#9c9c9c"/><rect x="599" y="384.8" width="2" height="2" fill="#9c9c9c"/>
 <path d="M609.4 378.6 H613.6 L615.6 380.6 V386.6 H609.4 Z" fill="#9c9c9c"/><rect x="611" y="382.4" width="3" height="2.6" fill="#535353"/>
 <rect x="632.2" y="377.6" width="3.2" height="9.6" fill="#3c3c3c" stroke="#383838" stroke-width="0.5"/><rect x="632.4" y="377.8" width="2.8" height="4" fill="#7a7a7a"/>
</svg>
<div class="a" style="left:485.9px;top:391.2px;width:154.1px;height:0.8px;background:#454545"></div>
<div class="a" style="left:485.9px;top:410.2px;width:154.1px;height:0.8px;background:#474747"></div>
<!-- blend row -->
<div class="a" style="left:489.8px;top:394.2px;width:69.8px;height:13px;background:#585858;border:0.6px solid #3c3c3c;border-radius:1px"></div>
<div class="t" style="left:494px;top:395.6px;color:#ededed">正常</div>
<svg style="left:553px;top:397.6px" width="3.6" height="6.4" viewBox="0 0 3.6 6.4"><path d="M0 2.4L1.8 0L3.6 2.4ZM0 4L1.8 6.4L3.6 4Z" fill="#d8d8d8"/></svg>
<div class="t" style="left:563.6px;top:395.6px;color:#dedede;letter-spacing:0.1px">不透明度:</div>
<div class="a" style="left:602px;top:394.6px;width:21px;height:12.4px;background:#484848;border:0.6px solid #404040"></div>
<div class="t" style="left:605.4px;top:395.8px;color:#767676;font-size:7.2px">100%</div>
<div class="a" style="left:624.4px;top:394.6px;width:11px;height:12.4px;background:#626262;border:0.6px solid #404040;border-radius:1px"></div>
<svg style="left:628px;top:399.8px" width="4" height="2.4" viewBox="0 0 4 2.4"><path d="M0 0H4L2 2.4Z" fill="#cfcfcf"/></svg>
<!-- lock row -->
<div class="t" style="left:490.4px;top:413.6px;color:#dedede">锁定:</div>
<svg id="locks" style="left:510px;top:411px" width="60" height="15" viewBox="510 411 60 15" fill="none">
 <rect x="514.2" y="415.2" width="6.8" height="6.8" stroke="#b4b4b4" stroke-width="0.8"/><path d="M514.2 415.2h2.3v2.3h-2.3zM518.7 415.2h2.3v2.3h-2.3zM516.5 417.5h2.2v2.2h-2.2zM514.2 419.7h2.3v2.3h-2.3zM518.7 419.7h2.3v2.3h-2.3z" fill="#b4b4b4"/>
 <path d="M536.2 413.4 L531.6 419" stroke="#b4b4b4" stroke-width="1.1" stroke-linecap="round"/><path d="M531.8 418 C530.2 418.2 529.8 419.8 528.4 421.8 C530.6 422 532.6 421.2 532.8 419.2Z" fill="#b4b4b4"/>
 <path d="M545.6 414.6V422.4M541.7 418.5H549.5" stroke="#a8a8a8" stroke-width="0.8"/><path d="M544.3 416L545.6 414.2L546.9 416ZM544.3 421L545.6 422.8L546.9 421ZM543.1 417.2L541.3 418.5L543.1 419.8ZM548.1 417.2L549.9 418.5L548.1 419.8Z" fill="#a8a8a8"/>
 <rect x="557" y="417.6" width="6" height="5" fill="#b4b4b4"/><path d="M558.2 417.6V415.8A1.8 1.8 0 0 1 561.8 415.8V417.6" stroke="#b4b4b4" stroke-width="1"/>
</svg>
<div class="t" style="left:580px;top:413.6px;color:#dedede">填充:</div>
<div class="a" style="left:602px;top:412.6px;width:21px;height:12.2px;background:#484848;border:0.6px solid #404040"></div>
<div class="t" style="left:605.4px;top:413.8px;color:#767676;font-size:7.2px">100%</div>
<div class="a" style="left:624.4px;top:412.6px;width:11px;height:12.2px;background:#626262;border:0.6px solid #404040;border-radius:1px"></div>
<svg style="left:628px;top:417.8px" width="4" height="2.4" viewBox="0 0 4 2.4"><path d="M0 0H4L2 2.4Z" fill="#cfcfcf"/></svg>
<!-- layer row -->
<div class="a" style="left:485.9px;top:428.2px;width:154.1px;height:0.8px;background:#3a3a3a"></div>
<div class="a" style="left:485.9px;top:429px;width:20px;height:15px;background:#535353"></div>
<div class="a" style="left:505.8px;top:429px;width:125.4px;height:15px;background:#5a6a80"></div>
<div class="a" style="left:505.4px;top:429px;width:0.7px;height:15px;background:#3a3a3a"></div>
<svg style="left:491.6px;top:433px" width="9" height="5.6" viewBox="0 0 9 5.6" fill="none"><path d="M0.3 2.8 C2.4 -0.2 6.6 -0.2 8.7 2.8 C6.6 5.8 2.4 5.8 0.3 2.8Z" stroke="#ececec" stroke-width="0.8"/><circle cx="4.5" cy="2.8" r="1.5" fill="#ececec"/></svg>
<div class="a" style="left:508.8px;top:431px;width:20.2px;height:10.6px;background:#fff;border:0.6px solid #222"></div>
<div class="t" style="left:536px;top:431.4px;color:#fff;font-style:italic;font-weight:bold;font-size:7.4px">背景</div>
<svg style="left:612.6px;top:432.4px" width="6.4" height="7.6" viewBox="0 0 6.4 7.6" fill="none"><rect x="0.5" y="3.2" width="5.4" height="4" stroke="#f0f0f0" stroke-width="0.9"/><path d="M1.6 3.2V2A1.6 1.6 0 0 1 4.8 2V3.2" stroke="#f0f0f0" stroke-width="0.9"/><rect x="2.6" y="4.4" width="1.2" height="1.6" fill="#f0f0f0"/></svg>
<div class="a" style="left:485.9px;top:444px;width:154.1px;height:0.8px;background:#3a3a3a"></div>

<!-- ===== JPEG dialog ===== -->
<div id="dlg">
 <div class="a" style="left:0;top:0;width:223px;height:16.4px;background:#fff"></div>
 <div class="t" style="left:2.2px;top:3px;font-size:7.6px;letter-spacing:-0.3px">JPEG 选项</div>
 <svg style="left:209.6px;top:4.6px" width="6.4" height="6.4" viewBox="0 0 6.4 6.4"><path d="M0 0L6.4 6.4M6.4 0L0 6.4" stroke="#222" stroke-width="0.8"/></svg>
 <!-- matte -->
 <div class="t" style="left:6.4px;top:25.4px;color:#9d9d9d!important"><span style="color:#a0a0a0">杂边(M):</span></div>
 <div class="a" style="left:42.6px;top:24px;width:63.6px;height:13.2px;background:#fbfbfb;border:0.7px solid #d6d6d6"></div>
 <div class="t" style="left:46.6px;top:25.6px"><span style="color:#a0a0a0">无</span></div>
 <svg style="left:95.6px;top:29.4px" width="5.6" height="3" viewBox="0 0 5.6 3"><path d="M0.2 0.2L2.8 2.6L5.4 0.2" stroke="#b4b4b4" stroke-width="0.8" fill="none"/></svg>
 <!-- group 1 -->
 <div class="a" style="left:6.6px;top:50px;width:140px;height:50.6px;border:0.7px solid #d0d0d0"></div>
 <div class="a" style="left:18.6px;top:42px;width:38.6px;height:9px;background:#eeeeee"></div>
 <div class="t" style="left:21.4px;top:42.9px;letter-spacing:0.55px">图像选项</div>
 <div class="t" style="left:12.2px;top:59.6px">品质(Q):</div>
 <div class="a" style="left:48.2px;top:58.4px;width:18.2px;height:12.2px;background:#fff;border:0.7px solid #7a7a7a"></div>
 <div class="t" style="left:52.4px;top:59.8px">8</div>
 <div class="t" style="left:12.4px;top:76.6px">小文件</div>
 <div class="t" style="left:117.6px;top:76.6px">大文件</div>
 <div class="a" style="left:16.6px;top:89px;width:120.4px;height:2.3px;background:#aaaaaa;border-top:0.6px solid #909090"></div>
 <!-- group 2 -->
 <div class="a" style="left:6.6px;top:111.4px;width:140px;height:68.6px;border:0.7px solid #d0d0d0"></div>
 <div class="a" style="left:18.8px;top:106.6px;width:38.8px;height:9px;background:#eeeeee"></div>
 <div class="t" style="left:21.8px;top:106.6px;letter-spacing:0.55px">格式选项</div>
 <!-- radios -->
 <svg style="left:12.3px;top:120.5px" width="8.8" height="8.8" viewBox="0 0 8.8 8.8"><circle cx="4.4" cy="4.4" r="3.95" fill="#fff" stroke="#333" stroke-width="0.75"/><circle cx="4.4" cy="4.4" r="2" fill="#222"/></svg>
 <div class="t" style="left:22.4px;top:120px;letter-spacing:0.2px">基线("标准")</div>
 <svg style="left:12.3px;top:134.1px" width="8.8" height="8.8" viewBox="0 0 8.8 8.8"><circle cx="4.4" cy="4.4" r="3.95" fill="#fff" stroke="#333" stroke-width="0.75"/></svg>
 <div class="t" style="left:22.4px;top:133.7px">基线已优化</div>
 <svg style="left:12.3px;top:147.6px" width="8.8" height="8.8" viewBox="0 0 8.8 8.8"><circle cx="4.4" cy="4.4" r="3.95" fill="#fff" stroke="#333" stroke-width="0.75"/></svg>
 <div class="t" style="left:22.4px;top:147.4px">连续</div>
 <div class="t" style="left:22px;top:162.8px"><span style="color:#a0a0a0">扫描:</span></div>
 <div class="a" style="left:46px;top:161.4px;width:36.2px;height:12.6px;background:#fbfbfb;border:0.7px solid #d6d6d6"></div>
 <div class="t" style="left:51px;top:162.6px"><span style="color:#9a9a9a">3</span></div>
 <svg style="left:72.4px;top:166.4px" width="5.6" height="3" viewBox="0 0 5.6 3"><path d="M0.2 0.2L2.8 2.6L5.4 0.2" stroke="#b4b4b4" stroke-width="0.8" fill="none"/></svg>
 <!-- red highlight box -->
 <div class="a" style="left:2.9px;top:49.1px;width:141.3px;height:69.9px;border:1.7px solid #e6282c"></div>
 <!-- quality select + dropdown -->
 <div class="a" style="left:71.4px;top:57.6px;width:40px;height:13.8px;background:#fff;border:1px solid #2f7fc9"></div>
 <div class="a" style="left:99.8px;top:58.4px;width:10.8px;height:12.2px;background:#cde4f7;border-left:0.8px solid #2f7fc9"></div>
 <svg style="left:102.6px;top:63.4px" width="5.6" height="3.2" viewBox="0 0 5.6 3.2"><path d="M0.2 0.2L2.8 2.8L5.4 0.2" stroke="#333" stroke-width="0.9" fill="none"/></svg>
 <div class="t" style="left:75.6px;top:59.8px">高</div>
 <div class="a" style="left:71.4px;top:71.4px;width:39.8px;height:42.4px;background:#fff;border:0.8px solid #2f7fc9;box-shadow:1px 1px 2px rgba(0,0,0,.35)"></div>
 <div class="a" style="left:72.2px;top:92.6px;width:38.2px;height:10.2px;background:#0a78d6"></div>
 <div class="t" style="left:74.4px;top:74.4px">低</div>
 <div class="t" style="left:74.4px;top:84px">中</div>
 <div class="t" style="left:74.4px;top:93px"><span style="color:#fff">高</span></div>
 <div class="t" style="left:74.4px;top:103.2px">最佳</div>
 <!-- buttons -->
 <div class="btn" style="left:157.6px;top:23px;width:58px;height:11.2px;border:1.3px solid #1a7ad4;line-height:9px">确定</div>
 <div class="btn" style="left:157.6px;top:41px;width:58px;height:11.2px;line-height:10px">取消</div>
 <!-- preview checkbox -->
 <div class="a" style="left:156.4px;top:62px;width:8.4px;height:8.4px;background:#fff;border:0.8px solid #333"></div>
 <svg style="left:157.6px;top:63.6px" width="6" height="5" viewBox="0 0 6 5"><path d="M0.4 2.4L2.2 4.2L5.6 0.4" stroke="#222" stroke-width="0.9" fill="none"/></svg>
 <div class="t" style="left:167.4px;top:62.2px">预览(P)</div>
 <div class="t" style="left:157px;top:80.2px;font-size:6.8px">24.7K</div>
</div>

</body>
</html>
